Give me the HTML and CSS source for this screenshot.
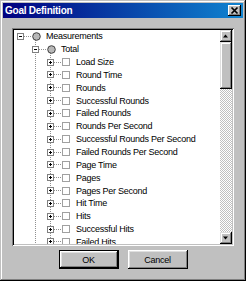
FILE: index.html
```html
<!DOCTYPE html>
<html>
<head>
<meta charset="utf-8">
<link rel="stylesheet" href="styles.css">
</head>
<body>
<div class="window">
  <div class="titlebar">
    <span class="title">Goal Definition</span>
    <span class="close"><svg width="13" height="11" viewBox="0 0 13 11"><path d="M3.5 2.5L9.5 8.5M9.5 2.5L3.5 8.5" stroke="#000" stroke-width="1.7" fill="none"/></svg></span>
  </div>
  <div class="body">
    <div class="box">
      <div class="tree">
        <div class="row l0">
          <svg class="exp" width="7" height="7" viewBox="0 0 7 7"><rect x="0.5" y="0.5" width="6" height="6" fill="#fff" stroke="#808080"/><path d="M2 3.5h3" stroke="#000"/></svg>
          <span class="hline"></span>
          <span class="ico"><svg width="9" height="9" viewBox="0 0 9 9"><circle cx="4.5" cy="4.5" r="3.8" fill="#b8b8b8" stroke="#404040"/></svg></span>
          <span class="label">Measurements</span>
        </div>
        <div class="row l1">
          <svg class="exp" width="7" height="7" viewBox="0 0 7 7"><rect x="0.5" y="0.5" width="6" height="6" fill="#fff" stroke="#808080"/><path d="M2 3.5h3" stroke="#000"/></svg>
          <span class="hline"></span>
          <span class="ico"><svg width="9" height="9" viewBox="0 0 9 9"><circle cx="4.5" cy="4.5" r="3.8" fill="#b8b8b8" stroke="#404040"/></svg></span>
          <span class="label">Total</span>
        </div>
        <div class="row l2"><svg class="exp" width="7" height="7" viewBox="0 0 7 7"><rect x="0.5" y="0.5" width="6" height="6" fill="#fff" stroke="#808080"/><path d="M2 3.5h3M3.5 2v3" stroke="#000"/></svg><span class="hline"></span><span class="ico"><span class="chk"></span></span><span class="label">Load Size</span></div>
        <div class="row l2"><svg class="exp" width="7" height="7" viewBox="0 0 7 7"><rect x="0.5" y="0.5" width="6" height="6" fill="#fff" stroke="#808080"/><path d="M2 3.5h3M3.5 2v3" stroke="#000"/></svg><span class="hline"></span><span class="ico"><span class="chk"></span></span><span class="label">Round Time</span></div>
        <div class="row l2"><svg class="exp" width="7" height="7" viewBox="0 0 7 7"><rect x="0.5" y="0.5" width="6" height="6" fill="#fff" stroke="#808080"/><path d="M2 3.5h3M3.5 2v3" stroke="#000"/></svg><span class="hline"></span><span class="ico"><span class="chk"></span></span><span class="label">Rounds</span></div>
        <div class="row l2"><svg class="exp" width="7" height="7" viewBox="0 0 7 7"><rect x="0.5" y="0.5" width="6" height="6" fill="#fff" stroke="#808080"/><path d="M2 3.5h3M3.5 2v3" stroke="#000"/></svg><span class="hline"></span><span class="ico"><span class="chk"></span></span><span class="label">Successful Rounds</span></div>
        <div class="row l2"><svg class="exp" width="7" height="7" viewBox="0 0 7 7"><rect x="0.5" y="0.5" width="6" height="6" fill="#fff" stroke="#808080"/><path d="M2 3.5h3M3.5 2v3" stroke="#000"/></svg><span class="hline"></span><span class="ico"><span class="chk"></span></span><span class="label">Failed Rounds</span></div>
        <div class="row l2"><svg class="exp" width="7" height="7" viewBox="0 0 7 7"><rect x="0.5" y="0.5" width="6" height="6" fill="#fff" stroke="#808080"/><path d="M2 3.5h3M3.5 2v3" stroke="#000"/></svg><span class="hline"></span><span class="ico"><span class="chk"></span></span><span class="label">Rounds Per Second</span></div>
        <div class="row l2"><svg class="exp" width="7" height="7" viewBox="0 0 7 7"><rect x="0.5" y="0.5" width="6" height="6" fill="#fff" stroke="#808080"/><path d="M2 3.5h3M3.5 2v3" stroke="#000"/></svg><span class="hline"></span><span class="ico"><span class="chk"></span></span><span class="label">Successful Rounds Per Second</span></div>
        <div class="row l2"><svg class="exp" width="7" height="7" viewBox="0 0 7 7"><rect x="0.5" y="0.5" width="6" height="6" fill="#fff" stroke="#808080"/><path d="M2 3.5h3M3.5 2v3" stroke="#000"/></svg><span class="hline"></span><span class="ico"><span class="chk"></span></span><span class="label">Failed Rounds Per Second</span></div>
        <div class="row l2"><svg class="exp" width="7" height="7" viewBox="0 0 7 7"><rect x="0.5" y="0.5" width="6" height="6" fill="#fff" stroke="#808080"/><path d="M2 3.5h3M3.5 2v3" stroke="#000"/></svg><span class="hline"></span><span class="ico"><span class="chk"></span></span><span class="label">Page Time</span></div>
        <div class="row l2"><svg class="exp" width="7" height="7" viewBox="0 0 7 7"><rect x="0.5" y="0.5" width="6" height="6" fill="#fff" stroke="#808080"/><path d="M2 3.5h3M3.5 2v3" stroke="#000"/></svg><span class="hline"></span><span class="ico"><span class="chk"></span></span><span class="label">Pages</span></div>
        <div class="row l2"><svg class="exp" width="7" height="7" viewBox="0 0 7 7"><rect x="0.5" y="0.5" width="6" height="6" fill="#fff" stroke="#808080"/><path d="M2 3.5h3M3.5 2v3" stroke="#000"/></svg><span class="hline"></span><span class="ico"><span class="chk"></span></span><span class="label">Pages Per Second</span></div>
        <div class="row l2"><svg class="exp" width="7" height="7" viewBox="0 0 7 7"><rect x="0.5" y="0.5" width="6" height="6" fill="#fff" stroke="#808080"/><path d="M2 3.5h3M3.5 2v3" stroke="#000"/></svg><span class="hline"></span><span class="ico"><span class="chk"></span></span><span class="label">Hit Time</span></div>
        <div class="row l2"><svg class="exp" width="7" height="7" viewBox="0 0 7 7"><rect x="0.5" y="0.5" width="6" height="6" fill="#fff" stroke="#808080"/><path d="M2 3.5h3M3.5 2v3" stroke="#000"/></svg><span class="hline"></span><span class="ico"><span class="chk"></span></span><span class="label">Hits</span></div>
        <div class="row l2"><svg class="exp" width="7" height="7" viewBox="0 0 7 7"><rect x="0.5" y="0.5" width="6" height="6" fill="#fff" stroke="#808080"/><path d="M2 3.5h3M3.5 2v3" stroke="#000"/></svg><span class="hline"></span><span class="ico"><span class="chk"></span></span><span class="label">Successful Hits</span></div>
        <div class="row l2"><svg class="exp" width="7" height="7" viewBox="0 0 7 7"><rect x="0.5" y="0.5" width="6" height="6" fill="#fff" stroke="#808080"/><path d="M2 3.5h3M3.5 2v3" stroke="#000"/></svg><span class="hline"></span><span class="ico"><span class="chk"></span></span><span class="label">Failed Hits</span></div>
      </div>
      <div class="scroll">
        <div class="sbtn"><svg width="12" height="12" viewBox="0 0 12 12"><path d="M3 7.5h5L5.5 4.5z" fill="#000"/></svg></div>
        <div class="thumb"></div>
        <div class="track"></div>
        <div class="sbtn"><svg width="12" height="12" viewBox="0 0 12 12"><path d="M3 4.5h5L5.5 7.5z" fill="#000"/></svg></div>
      </div>
    </div>
    <div class="buttons">
      <div class="btn default">OK</div>
      <div class="btn">Cancel</div>
    </div>
  </div>
</div>
</body>
</html>
```
FILE: styles.css
```css
html, body {
  margin: 0;
  padding: 0;
  background: #c0c0c0;
}
.window {
  width: 246px;
  height: 281px;
  box-sizing: border-box;
  padding: 3px;
  background: #c0c0c0;
  box-shadow: inset -1px -1px #000, inset 1px 1px #c0c0c0, inset -2px -2px #808080, inset 2px 2px #fff;
  display: flex;
  flex-direction: column;
  font-family: "Liberation Sans", Arial, sans-serif;
}
.titlebar {
  height: 15px;
  flex: none;
  background: linear-gradient(to right, #000080, #1084d0);
  display: flex;
  align-items: center;
  justify-content: space-between;
  padding: 0 2px;
}
.title {
  color: #fff;
  font-weight: bold;
  font-size: 10px;
  letter-spacing: -0.25px;
  line-height: 15px;
}
.close {
  width: 13px;
  height: 11px;
  background: #c0c0c0;
  box-shadow: inset -1px -1px #000, inset 1px 1px #fff, inset -2px -2px #808080;
  display: flex;
}
.body {
  padding: 10px 9px 0 9px;
  display: flex;
  flex-direction: column;
}
.box {
  height: 218px;
  box-sizing: border-box;
  padding: 2px;
  background: #fff;
  box-shadow: inset 1px 1px #808080, inset -1px -1px #fff, inset 2px 2px #000, inset -2px -2px #c0c0c0;
  display: flex;
}
.tree {
  flex: 1;
  overflow: hidden;
  background:
    repeating-linear-gradient(to bottom, #909090 0 1px, transparent 1px 2px) 21px 10px / 1px 100% no-repeat,
    repeating-linear-gradient(to bottom, #909090 0 1px, transparent 1px 2px) 36px 23px / 1px 100% no-repeat,
    #fff;
  font-size: 9px;
  letter-spacing: -0.25px;
  color: #000;
}
.row {
  height: 12.85px;
  display: flex;
  align-items: center;
  white-space: nowrap;
}
.l0 { padding-left: 3px; }
.l1 { padding-left: 18px; }
.l2 { padding-left: 33px; }
.exp {
  flex: none;
  display: block;
}
.hline {
  width: 8px;
  height: 1px;
  flex: none;
  background: repeating-linear-gradient(to right, #909090 0 1px, transparent 1px 2px);
}
.ico {
  width: 14px;
  flex: none;
  display: flex;
  align-items: center;
}
.ico svg { display: block; }
.chk {
  width: 8px;
  height: 8px;
  box-sizing: border-box;
  border: 1px solid #a0a0a0;
  background: #fff;
}
.label {
  line-height: 12px;
}
.scroll {
  width: 12px;
  flex: none;
  display: flex;
  flex-direction: column;
}
.sbtn {
  height: 12px;
  flex: none;
  background: #c0c0c0;
  box-shadow: inset -1px -1px #000, inset 1px 1px #dfdfdf, inset -2px -2px #808080, inset 2px 2px #fff;
}
.sbtn svg { display: block; }
.thumb {
  height: 47px;
  flex: none;
  background: #c0c0c0;
  box-shadow: inset -1px -1px #000, inset 1px 1px #dfdfdf, inset -2px -2px #808080, inset 2px 2px #fff;
}
.track {
  flex: 1;
  background: repeating-conic-gradient(#c0c0c0 0 25%, #fff 0 50%) 0 0 / 2px 2px;
}
.buttons {
  display: flex;
  justify-content: center;
  gap: 9px;
  margin-top: 4px;
}
.btn {
  width: 60px;
  height: 19px;
  box-sizing: border-box;
  background: #c0c0c0;
  box-shadow: inset -1px -1px #000, inset 1px 1px #fff, inset -2px -2px #808080, inset 2px 2px #dfdfdf;
  display: flex;
  align-items: center;
  justify-content: center;
  font-size: 9px;
  letter-spacing: -0.25px;
  color: #000;
}
.btn.default {
  border: 1px solid #000;
}
```
